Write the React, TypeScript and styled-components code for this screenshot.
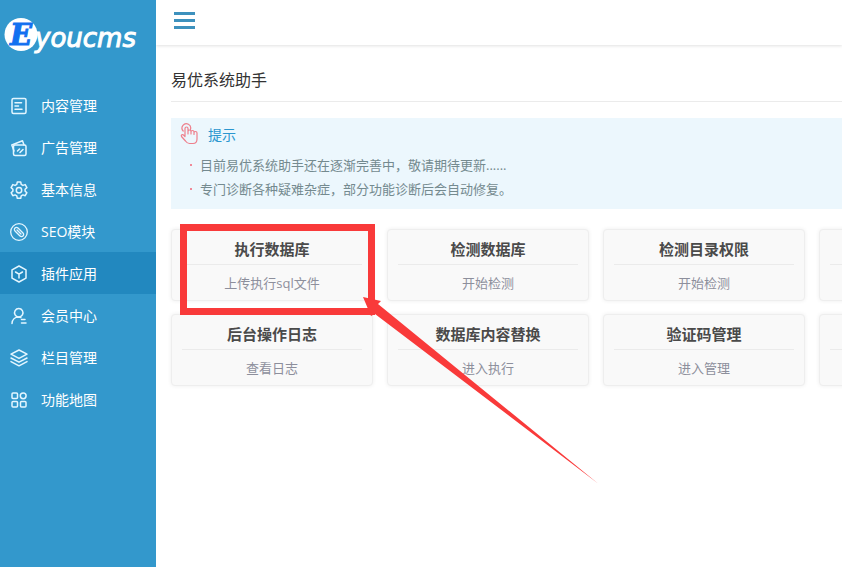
import React from "react";
import styled, { createGlobalStyle } from "styled-components";

const Global = createGlobalStyle`
  *, *::before, *::after { box-sizing: border-box; }
  body {
    margin: 0;
    background: #fff;
    color: #333;
    font-family: "Open Sans", "Noto Sans CJK SC", sans-serif;
    font-size: 14px;
    overflow: hidden;
  }
  a { color: inherit; text-decoration: none; }
  h1, h2, h3, p, ul { margin: 0; padding: 0; font-weight: 400; list-style: none; }
`;

const Page = styled.div`
  display: flex;
  min-height: 100vh;
`;

const Sidebar = styled.aside`
  flex: none;
  width: 156px;
  background: #3398cc;
  color: #fff;
`;

const Logo = styled.a`
  display: block;
  height: 84px;
  svg { display: block; }
`;

const MenuItem = styled.a<{ $active?: boolean }>`
  display: flex;
  align-items: center;
  gap: 12px;
  height: 42px;
  padding: 2px 0 0 9px;
  line-height: 20px;
  background: ${(p) => (p.$active ? "#2288bf" : "transparent")};
`;

const MenuIcon = styled.svg`
  flex: none;
  width: 20px;
  height: 20px;
  fill: none;
  stroke: #e4f6ff;
  stroke-width: 1.5;
  stroke-linecap: round;
  stroke-linejoin: round;
`;

const Main = styled.main`
  flex: 1;
  min-width: 0;
  overflow: hidden;
`;

const TopBar = styled.header`
  display: flex;
  align-items: center;
  height: 45px;
  padding: 0 18px 4px;
  box-shadow: 0 1px 3px rgba(0, 0, 0, 0.12);
`;

const Toggle = styled.button`
  padding: 0;
  border: 0;
  background: none;
  cursor: pointer;
  svg { display: block; }
`;

const Content = styled.div`
  padding: 16px 0 16px 15px;
`;

const Title = styled.h1`
  height: 41px;
  border-bottom: 1px solid #ebebeb;
  font-size: 16px;
  line-height: 38px;
`;

const Notice = styled.section`
  margin: 16px 0 20px;
  padding: 4px 9px 8px;
  background: #ecf7fd;
`;

const NoticeHead = styled.h2`
  display: flex;
  align-items: center;
  gap: 9px;
  height: 24px;
  margin-bottom: 7px;
  color: #2a96cf;
  font-size: 14px;
`;

const Tip = styled.li`
  display: flex;
  align-items: center;
  gap: 8px;
  padding-left: 10px;
  color: #748a8f;
  font-size: 13px;
  line-height: 24px;
  &::before {
    content: "";
    width: 2px;
    height: 2px;
    background: #f08a98;
  }
`;

const CardArea = styled.div`
  position: relative;
`;

const Cards = styled.div`
  display: grid;
  grid-template-columns: repeat(4, 202px);
  gap: 13px 14px;
`;

const Card = styled.a`
  height: 72px;
  padding: 5px 10px;
  border: 1px solid #eee;
  border-radius: 4px;
  background: #f9f9f9;
  box-shadow: 0 0 4px rgba(0, 0, 0, 0.07);
  text-align: center;
`;

const CardTitle = styled.h3`
  height: 30px;
  border-bottom: 1px solid #ebebeb;
  color: #4a4a4a;
  font-size: 15px;
  font-weight: 700;
  line-height: 28px;
`;

const CardAction = styled.p`
  color: #8d8f9c;
  font-size: 13px;
  line-height: 36px;
`;

const Marker = styled.svg`
  position: absolute;
  left: 9px;
  top: -5px;
  pointer-events: none;
`;

const menu: { label: string; active?: boolean; icon: React.ReactNode }[] = [
  {
    label: "内容管理",
    icon: (
      <>
        <rect x="3" y="2.500" width="14" height="15" rx="1.500" />
        <path d="M6 6.800h6.500M6 10h3.500M6 13.200h7" />
      </>
    ),
  },
  {
    label: "广告管理",
    icon: (
      <>
        <rect x="4.500" y="7" width="12.500" height="10.500" rx="1.500" />
        <path d="M5 13 2.800 7 13.500 2.800 15 7M8.500 13l2-2M11 14.500l3-3" />
      </>
    ),
  },
  {
    label: "基本信息",
    icon: (
      <>
        <path d="M8.300 2h3.400l.5 2.400 1.700 1 2.300-.8 1.700 3-1.800 1.600v1.900l1.800 1.600-1.700 3-2.300-.8-1.700 1-.5 2.400H8.300l-.5-2.400-1.700-1-2.300.8-1.700-3 1.800-1.600V9.200L2.100 7.600l1.700-3 2.300.8 1.700-1z" />
        <circle cx="10" cy="10.200" r="2.700" />
      </>
    ),
  },
  {
    label: "SEO模块",
    icon: (
      <>
        <circle cx="10" cy="10" r="8.300" strokeWidth="1.300" />
        <path strokeWidth="1.300" d="M6 6a2.100 2.100 0 0 1 3 0l5 5a2.100 2.100 0 0 1-3 3L6 9a2.100 2.100 0 0 1 0-3zM8 8l4 4" />
      </>
    ),
  },
  {
    label: "插件应用",
    active: true,
    icon: <path d="M10 2l7 3.900v8.200L10 18l-7-3.900V5.900zM6.500 8l3.500 2.200L13.500 8M10 10.200V14" />,
  },
  {
    label: "会员中心",
    icon: <path d="M9.800 11a4.200 4.200 0 1 0-.1 0C6 11 3.200 13.500 3 17.500M12.500 13.500h3.500M12.500 17h4.500M9.800 11l2 .5" />,
  },
  {
    label: "栏目管理",
    icon: <path d="M10 2l8 4.200-8 4.200-8-4.200zM2 10l8 4.200 8-4.200M2 13.600l8 4.200 8-4.200" />,
  },
  {
    label: "功能地图",
    icon: (
      <>
        <rect x="3" y="3" width="5.500" height="5.500" rx="1" />
        <circle cx="14.200" cy="5.800" r="2.900" />
        <rect x="3" y="11.500" width="5.500" height="5.500" rx="1" />
        <rect x="11.500" y="11.500" width="5.500" height="5.500" rx="1" />
      </>
    ),
  },
];

const cards = [
  ["执行数据库", "上传执行sql文件"],
  ["检测数据库", "开始检测"],
  ["检测目录权限", "开始检测"],
  ["", ""],
  ["后台操作日志", "查看日志"],
  ["数据库内容替换", "进入执行"],
  ["验证码管理", "进入管理"],
  ["", ""],
];

const tips = ["目前易优系统助手还在逐渐完善中，敬请期待更新......", "专门诊断各种疑难杂症，部分功能诊断后会自动修复。"];

export default function App() {
  return (
    <Page>
      <Global />
      <Sidebar>
        <Logo href="#">
          <svg width="156" height="60" viewBox="0 0 156 60" role="img" aria-label="Eyoucms">
            <circle cx="21" cy="34.500" r="16.500" fill="#fff" />
            <text x="10" y="45" fontFamily="DejaVu Serif" fontWeight="700" fontStyle="italic" fontSize="29" fill="#1270f0" stroke="#1270f0">E</text>
            <text x="35" y="47" fontFamily="DejaVu Sans" fontStyle="italic" fontSize="26" fill="#fff" stroke="#fff">youcms</text>
          </svg>
        </Logo>
        <nav>
          {menu.map((m) => (
            <MenuItem key={m.label} href="#" $active={m.active}>
              <MenuIcon viewBox="0 0 20 20" aria-hidden="true">{m.icon}</MenuIcon>
              {m.label}
            </MenuItem>
          ))}
        </nav>
      </Sidebar>
      <Main>
        <TopBar>
          <Toggle aria-label="菜单">
            <svg width="21" height="17" viewBox="0 0 21 17" fill="#3d91bd">
              <path d="M0 0h21v3H0zM0 7h21v3H0zM0 14h21v3H0z" />
            </svg>
          </Toggle>
        </TopBar>
        <Content>
          <Title>易优系统助手</Title>
          <Notice>
            <NoticeHead>
              <svg width="19" height="22" viewBox="0 0 19 22" fill="none" stroke="#ee7f8c" strokeWidth="1.200" strokeLinecap="round" strokeLinejoin="round" aria-hidden="true">
                <path d="M3.200 8A4.300 4.300 0 1 1 10.400 6.500" />
                <path d="M5 13V5.500a1.500 1.500 0 0 1 3 0V11M8 8.500a1.500 1.500 0 0 1 3 0V11M11 9a1.500 1.500 0 0 1 3 0v2.500M14 10a1.400 1.400 0 0 1 3 0v6c0 3-1.500 4.500-4 4.500H9.500c-2 0-3-1-4-2.500L1.500 13.500c-.8-1.500 1-2.500 2-1.500L5 13.500" />
              </svg>
              提示
            </NoticeHead>
            <ul>
              {tips.map((t) => (
                <Tip key={t}>{t}</Tip>
              ))}
            </ul>
          </Notice>
          <CardArea>
            <Cards>
              {cards.map(([title, action], i) => (
                <Card key={i} href="#">
                  <CardTitle>{title}</CardTitle>
                  <CardAction>{action}</CardAction>
                </Card>
              ))}
            </Cards>
            <Marker width="420" height="262" viewBox="0 0 420 262" aria-hidden="true">
              <rect x="3.500" y="3.500" width="188" height="84" fill="none" stroke="#f93a3a" strokeWidth="7" />
              <path d="M183 73l18 4-3 3 220 179.500L195 90l-4 2z" fill="#f93a3a" />
            </Marker>
          </CardArea>
        </Content>
      </Main>
    </Page>
  );
}
